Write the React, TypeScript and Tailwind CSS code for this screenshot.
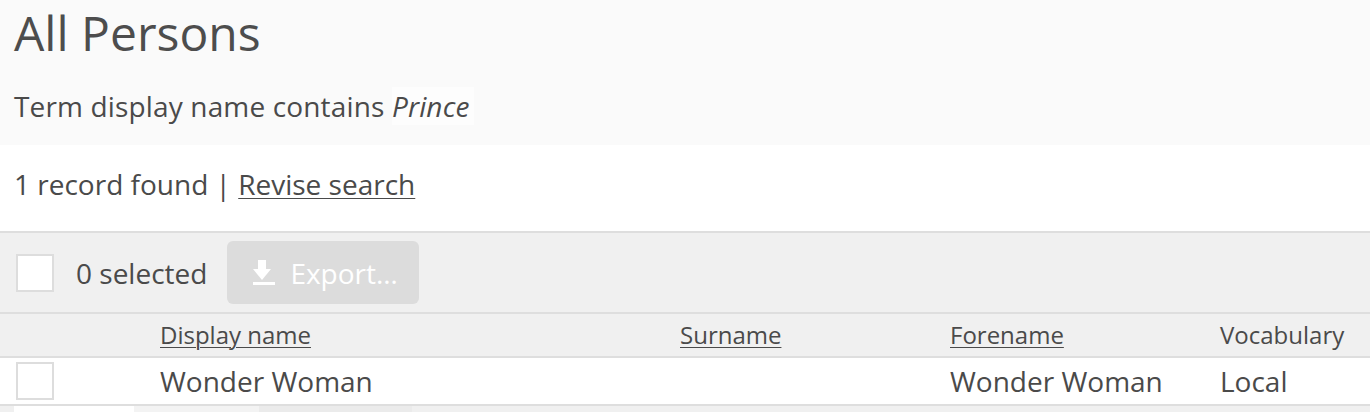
import React from 'react';

const columns = [
  { label: 'Display name', sortable: true, width: 'w-[520px]' },
  { label: 'Surname', sortable: true, width: 'w-[270px]' },
  { label: 'Forename', sortable: true, width: 'w-[270px]' },
  { label: 'Vocabulary', sortable: false, width: 'flex-1' },
];

const rows = [{ id: 1, values: ['Wonder Woman', '', 'Wonder Woman', 'Local'] }];

const DownloadIcon = () => (
  <svg width="22" height="25" viewBox="0 0 22 25" className="text-white" fill="currentColor">
    <rect x="5" y="0" width="8" height="10" />
    <polygon points="0,9 18,9 9,20" />
    <rect x="0" y="22" width="22" height="3" />
  </svg>
);

const Checkbox = () => (
  <span className="block w-[38px] h-[38px] bg-white border-2 border-[#dddddd]" />
);

export default function App() {
  return (
    <div className="w-[1370px] min-h-screen bg-white text-[#4a4a4a] font-['Open_Sans',sans-serif]">
      <header className="bg-[#fafafa] h-[145px] pl-[14px] pt-[5px]">
        <h1 className="text-[48px] leading-[56px] font-normal text-[#4d4d4d]">All Persons</h1>
        <p className="mt-[25px] text-[28px] leading-[40px] tracking-[0.15px]">
          Term display name contains <em className="bg-[#fdfdfd] pr-[4px]">Prince</em>
        </p>
      </header>

      <div className="h-[86px] pl-[14px] pt-[19px]">
        <p className="text-[28px] leading-[40px]">
          1 record found | <a href="#" className="underline underline-offset-[3px] decoration-1">Revise search</a>
        </p>
      </div>

      <div className="border-t-2 border-[#dedede] bg-[#f0f0f0] h-[81px] flex items-center pl-[16px]">
        <Checkbox />
        <span className="ml-[22px] text-[28px] leading-[40px]">0 selected</span>
        <button
          disabled
          className="ml-[20px] h-[63px] w-[192px] rounded-[6px] bg-[#dcdcdc] flex items-center pl-[26px] gap-[15px] text-white text-[28px]"
        >
          <DownloadIcon />
          <span className="leading-[40px]">Export…</span>
        </button>
      </div>

      <div className="border-t-2 border-[#dedede] bg-[#f0f0f0] h-[44px] flex items-center pl-[160px]">
        {columns.map((c) => (
          <div key={c.label} className={`${c.width} text-[24px] leading-[32px] text-[#4a4a4a]`}>
            {c.sortable ? (
              <a href="#" className="underline underline-offset-[3px] decoration-1">{c.label}</a>
            ) : (
              c.label
            )}
          </div>
        ))}
      </div>

      {rows.map((r) => (
        <div key={r.id} className="border-t-2 border-[#dedede] bg-white h-[48px] flex items-center">
          <div className="w-[160px] pl-[16px]">
            <Checkbox />
          </div>
          {r.values.map((v, i) => (
            <div key={i} className={`${columns[i].width} text-[28px] leading-[40px]`}>
              {v}
            </div>
          ))}
        </div>
      ))}

      <div className="border-t-2 border-[#dedede] bg-[#f0f0f0] flex pl-[14px] h-[40px]">
        <span className="w-[120px] h-[40px] bg-white" />
        <span className="w-[125px] h-[40px] bg-[#f3f3f3]" />
        <span className="w-[153px] h-[40px] bg-[#ebebeb]" />
      </div>
    </div>
  );
}
